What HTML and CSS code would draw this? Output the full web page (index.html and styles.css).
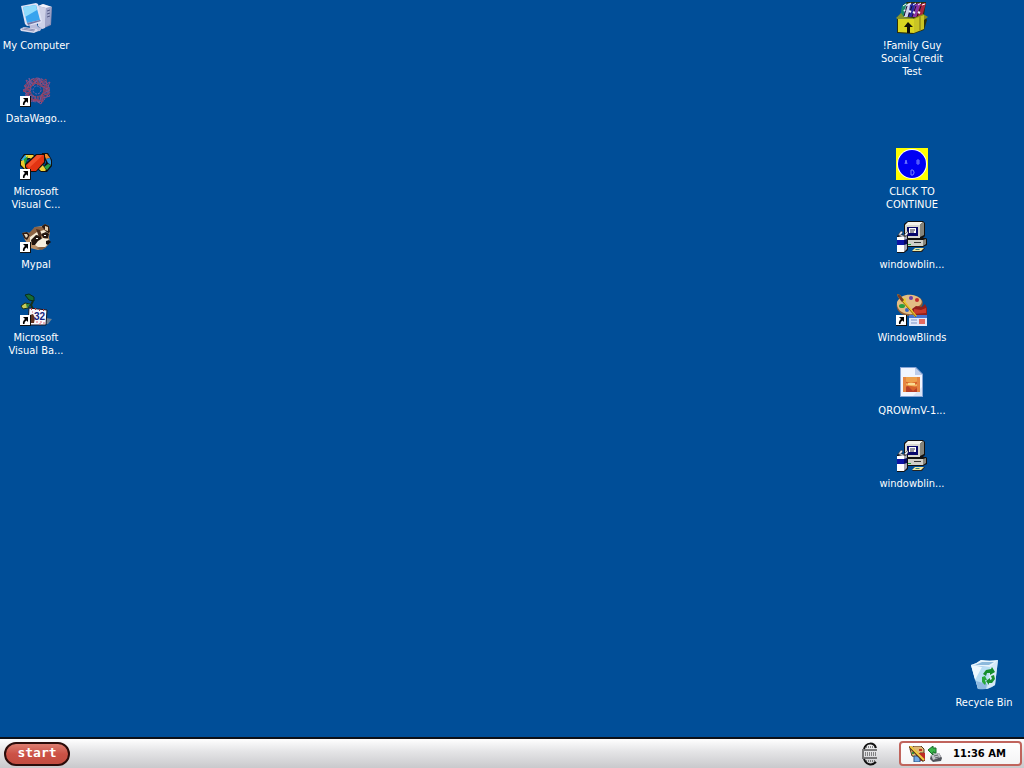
FILE: index.html
```html
<!DOCTYPE html>
<html lang="en">
<head>
    <meta charset="UTF-8">
    <meta name="viewport" content="width=device-width, initial-scale=1.0">
    <title>Desktop</title>
    <link rel="stylesheet" href="styles.css">
</head>
<body>
    <!-- Shared icon parts -->
    <svg class="sprites" aria-hidden="true">
        <symbol id="shortcut" viewBox="0 0 11 11">
            <rect width="11" height="11" fill="#111"/>
            <rect width="10" height="10" fill="#fff"/>
            <path d="M3 2h5v5L6.500 5.500C5 6.500 4.500 7.500 4.500 9H3C2.500 7 3.500 5 5 4z" fill="#000"/>
        </symbol>
        <symbol id="installer" viewBox="0 0 32 32">
            <path d="M8 3l4-3h15l2 2v13l-3 3H10l-2-2z" fill="#111"/>
            <path d="M9 4l3-3h15l-3 3z" fill="#f4f4ee"/>
            <path d="M24 4l3-3 1 1v12l-4 2z" fill="#85857c"/>
            <path d="M9 4h15v13H9z" fill="#d8d8d0"/>
            <path d="M11 6h11v9H11z" fill="#08086a"/>
            <path d="M13 7h7v5h-7z" fill="#fff"/>
            <path d="M14 9h5M14 11h4" stroke="#334" fill="none"/>
            <path d="M10 19l4-2h16l1 1v6l-4 2H10z" fill="#111"/>
            <path d="M11 19h16v6H11z" fill="#cfcfc8"/>
            <path d="M27 19l3-1v5l-3 2z" fill="#85857c"/>
            <path d="M18 21h7v1h-7z" fill="#333"/>
            <path d="M12 23h3v1h-3z" fill="#1a9a32"/>
            <path d="M1 15l3-2 4 1 4 1v14l-4 3H1z" fill="#111"/>
            <path d="M1 16h7v15H1z" fill="#fff"/>
            <path d="M8 16l3-1v13l-3 3z" fill="#a9aab8"/>
            <path d="M1 19h7v5H1z" fill="#0c14a4"/>
            <path d="M8 19l3-1v5l-3 1z" fill="#060a62"/>
            <path d="M2 15l3-1 4 1-2 1z" fill="#d9dbe8"/>
            <path d="M2 14l3-4 2 1-2 3zM8 14l4-4v3l-2 2z" fill="#e7e8f2" stroke="#222" stroke-width="0.500"/>
            <path d="M19 27h10l-3 4H16z" fill="#222"/>
            <path d="M19 27h9l-3 3h-9z" fill="#efe9a2"/>
            <path d="M20 28h4l-1 1h-4z" fill="#2b7f83"/>
        </symbol>
    </svg>

    <main class="desktop">
        <a href="#" class="icon left row-1">
            <svg viewBox="0 0 32 32" aria-hidden="true">
                <path d="M18 4l5-2 9 3-1 18-9 4-4-3z" fill="#8e92b8"/>
                <path d="M18 4l5-2 9 3-6 1z" fill="#f1f2fb"/>
                <path d="M18 4l8 2-1 20-3 1-4-3z" fill="#cfd2e8"/>
                <path d="M26 6l5-1-1 17-5 3z" fill="#a2a7cb"/>
                <path d="M27 9l3-1M27 12l3-1M27 15l3-1" stroke="#565c88"/>
                <path d="M9 21l7-1 2 5 4 1-2 3-9 1-4-2 3-2z" fill="#b9bddb"/>
                <path d="M1 4l15-3 2 1 4 17-1 2-14 3-2-2z" fill="#dfe3f5"/>
                <path d="M3 5l13-2 4 15-13 3z" fill="#38a4ee"/>
                <path d="M3 5l13-2 1 5-12 7z" fill="#8fdbfc"/>
                <path d="M7 21l13-3 1 1-13 4z" fill="#7277a6"/>
                <path d="M0 27l4-2 13 2 1 2-4 2L1 29z" fill="#d8daed"/>
                <path d="M2 27l12 2M4 26l11 2" stroke="#8d91b5"/>
            </svg>
            <span>My Computer</span>
        </a>
        <a href="#" class="icon left row-2">
            <svg viewBox="0 0 32 32" aria-hidden="true">
                <g fill="none" stroke-width="1">
                    <circle cx="17" cy="15" r="9" stroke="#604a80" stroke-width="6" stroke-dasharray="2 1"/>
                    <path d="M6 5l7 4 6-6 5 7 6-3-4 9 4 5-7 2-2 6-6-4-8 3 1-8-5-5 6-3z" stroke="#8f4a83"/>
                    <path d="M4 11l8-7 6 6 8-6 1 10 3 4-9 3-1 6-8-3-6-2 4-6z" stroke="#a0415c"/>
                    <path d="M9 3l2 12-6 5 9 1 5 7 3-9 8-4-9-4-2-8-6 8z" stroke="#6d5a9f"/>
                    <path d="M3 16l9-5 4-8 4 8 10 2-8 6 1 8-8-3-8 2 2-8z" stroke="#95405f"/>
                    <circle cx="17" cy="15" r="12" stroke="#7a5590" stroke-dasharray="3 2"/>
                    <circle cx="17" cy="15" r="7" stroke="#a04458" stroke-dasharray="2 1"/>
                    <circle cx="17" cy="15" r="4" stroke="#7560a8" stroke-dasharray="2 1"/>
                </g>
                <use href="#shortcut" x="0" y="21" width="11" height="11"/>
            </svg>
            <span>DataWago...</span>
        </a>
        <a href="#" class="icon left row-3">
            <svg viewBox="0 0 32 32" aria-hidden="true">
                <!-- left loop -->
                <path d="M0 12l4-6h9l5 4 3 4-5 3-7 7-3-1-6-5z" fill="#101010"/>
                <path d="M1 12l4-5h4L4 14z" fill="#35a9e0"/>
                <path d="M6 7h7l4 4-3 3-4-4H6z" fill="#f3d239"/>
                <path d="M4 11l4-3-1 4-1 3 4 3-2 3-4-3z" fill="#22a03a"/>
                <path d="M1 13l3-1 1 6 3 3-2 1-5-5z" fill="#f0c92c"/>
                <path d="M7 12l3-1 3 3-5 4-2-2z" fill="#004e98"/>
                <!-- right loop -->
                <path d="M22 5h6l4 7v6l-5 6h-6l-5-4 5-6z" fill="#101010"/>
                <path d="M24 6h3l3 4-4 1z" fill="#ee8a2a"/>
                <path d="M26 11l4-1 1 3v4l-3-2z" fill="#2c8fd8"/>
                <path d="M28 16l3 1-4 5-3-3z" fill="#2a9f48"/>
                <path d="M18 20l4-4 2 3 2 3-1 1h-4z" fill="#f3d239"/>
                <path d="M24 12l2 1v2l-2 3-2-2z" fill="#004e98"/>
                <path d="M16 6h9v9l-9 9H9l-4-4v-4z" fill="#101010"/>
                <path d="M17 7h7v7l-8 9h-6l-4-4v-2z" fill="#e23412"/>
                <path d="M17 7h6L9 20l-2-3z" fill="#f2522b"/>
                <use href="#shortcut" x="0" y="21" width="11" height="11"/>
            </svg>
            <span>Microsoft<br>Visual C...</span>
        </a>
        <a href="#" class="icon left row-4">
            <svg viewBox="0 0 32 32" aria-hidden="true">
                <path d="M2 12l4-1 4 1 5-6 7-1 3-2 4 2 1 6-1 5 1 6-5 5-7 2-8-2-5-8z" fill="#b98f68"/>
                <path d="M2 12l5-1 3 3-3 5-3-2z" fill="#2c1b13"/>
                <path d="M4 13l3 0 1 2-2 2z" fill="#e8d8be"/>
                <path d="M22 5l3-2 4 2 1 6-3 2-5-4z" fill="#2c1b13"/>
                <path d="M25 5l3 1v4l-3-1z" fill="#e6cfae"/>
                <path d="M9 12l6-6 7 0 4 4-8 2-7 6z" fill="#8c6243"/>
                <path d="M10 16l7-5 7-2 4 3-2 2-8 1-5 7-3-1z" fill="#f5e9d5"/>
                <path d="M11 19l5-5 5 1 1 4-5 5-5 0z" fill="#21140f"/>
                <path d="M21 13l5-2 3 2-1 4-4 1z" fill="#21140f"/>
                <path d="M18 20l5-3 5 1 2 3-5 5-7 0-3-2z" fill="#f7efdf"/>
                <path d="M26 20l3-1 2 2-3 3-2-1z" fill="#15100f"/>
                <path d="M16 8l4 1 2 6-3 1z" fill="#4c2f20"/>
                <path d="M16 17h2v1h-2zM24 14h2v1h-2z" fill="#fff"/>
                <path d="M16 27l5-1 5 0-4 3z" fill="#856042"/>
                <use href="#shortcut" x="0" y="21" width="11" height="11"/>
            </svg>
            <span>Mypal</span>
        </a>
        <a href="#" class="icon left row-5">
            <svg viewBox="0 0 32 32" aria-hidden="true">
                <path d="M26 24l6 1-4 5h-3z" fill="#6d8295"/>
                <path d="M5 1l4-1 5 3v4l-5-1z" fill="#176c36" stroke="#0c2c18"/>
                <path d="M1 12l4-3 5 1-2 4-5 1z" fill="#c9cb5a" stroke="#1c3014"/>
                <path d="M6 10l4 0-3 4z" fill="#2d8440"/>
                <path d="M13 7l-2 4 2 4" stroke="#182f18" fill="none" stroke-width="2"/>
                <path d="M9 14l18 2-1 15-18 0z" fill="#f8f8fd" stroke="#151520"/>
                <path d="M11 15h1M15 15h1M19 16h1M23 16h1" stroke="#b33540" stroke-width="2"/>
                <path d="M10 21l3-1 2 4-1 5h-4z" fill="#60321f"/>
                <path d="M16 28h2M20 28h2M23 29h2M19 30h2M12 18h1" stroke="#dd6673"/>
                <text x="14" y="26" class="calendar-day">32</text>
                <use href="#shortcut" x="0" y="21" width="11" height="11"/>
            </svg>
            <span>Microsoft<br>Visual Ba...</span>
        </a>

        <a href="#" class="icon right row-1">
            <svg viewBox="0 0 32 32" aria-hidden="true">
                <path d="M1 15l4-3 2-9 4-3h19l-2 13 3 5-3 10-11 4-16-1z" fill="#2d3008"/>
                <path d="M6 4l4-3 2 1-3 13H4z" fill="#188a6c"/>
                <path d="M10 3l3-2 3 1-3 13H8z" fill="#cfd0ea"/>
                <path d="M14 3l3-2 3 1-3 13h-5z" fill="#272b9e"/>
                <path d="M19 3l3-2 3 1-4 13h-5z" fill="#8a35a8"/>
                <path d="M24 3l3-2 3 0-4 14h-6z" fill="#a82441"/>
                <path d="M7 4l3-2M12 3l3-2M17 3l3-2M22 3l3-2M26 3l3-1" stroke="#fff"/>
                <path d="M11 4l-3 10M16 4l-4 11M20 4l-4 11M25 4l-4 11" stroke="#1c1030"/>
                <path d="M8 8l1 1M13 9l2 1M17 10l2 1M22 10l2 1" stroke="#f0f2fb" stroke-width="2"/>
                <path d="M0 16l5-5 3 4 10 1-2 3-13-1z" fill="#87952d"/>
                <path d="M18 16l9-4 5 3-4 3-9 2z" fill="#8c8f1c"/>
                <path d="M2 17l16 0v14l-16-1z" fill="#d9d522"/>
                <path d="M18 17l10-4v14l-10 4z" fill="#c9c425"/>
                <path d="M23 15l2-1v14l-2 1z" fill="#a29b1b"/>
                <path d="M12 20l5 5h-3v6h-3v-6H8z" fill="#100f08"/>
            </svg>
            <span>!Family Guy<br>Social Credit<br>Test</span>
        </a>
        <a href="#" class="icon right row-3">
            <svg viewBox="0 0 32 32" aria-hidden="true">
                <rect width="32" height="32" fill="#ffff00"/>
                <circle cx="16" cy="16" r="15" fill="#fff"/>
                <circle cx="16" cy="16" r="14" fill="#0000f4"/>
                <path d="M9 16l1-4 1 4M9 15h2M21 12v4h2v-4zM21 14h2" fill="none" stroke="#6e79ff"/>
                <path d="M15 22h2l1 2v1l-1 2h-2z" fill="none" stroke="#7885ff"/>
            </svg>
            <span>CLICK TO<br>CONTINUE</span>
        </a>
        <a href="#" class="icon right row-4">
            <svg viewBox="0 0 32 32" aria-hidden="true"><use href="#installer"/></svg>
            <span>windowblin...</span>
        </a>
        <a href="#" class="icon right row-5">
            <svg viewBox="0 0 32 32" aria-hidden="true">
                <path d="M1 9C4 2 13-1 20 2c6 2 8 6 6 10-2 3-5 1-6 4 0 4-1 7-6 6C6 22-1 17 1 9z" fill="#8e5c35"/>
                <path d="M1 8C4 1 13-1 20 2c5 2 7 5 5 8-2 3-5 2-6 5-1 4-2 6-6 5C6 20 0 15 1 8z" fill="#e2bd85"/>
                <ellipse cx="6" cy="12" rx="3" ry="2" fill="#2c9d3d"/>
                <ellipse cx="8" cy="6" rx="2" ry="2" fill="#e7d22d"/>
                <ellipse cx="15" cy="4" rx="2" ry="2" fill="#6c3fa5"/>
                <ellipse cx="21" cy="6" rx="2" ry="2" fill="#c52c2c"/>
                <ellipse cx="11" cy="16" rx="2" ry="2" fill="#3265c9"/>
                <path d="M16 15l4-3 6 1 3-3 2 4v8H18z" fill="#911f1c"/>
                <path d="M18 15l7 1 5-2v5l-12 1z" fill="#c93a2c"/>
                <path d="M13 21h18v11H13z" fill="#dfe8fa"/>
                <path d="M13 21h18v3H13z" fill="#4874d1"/>
                <path d="M15 26h6M15 29h6" stroke="#7b93c9"/>
                <path d="M23 25h6v5h-6z" fill="#e36b61"/>
                <path d="M1 0l3 1 17 21-2 1L2 3z" fill="#eac32e"/>
                <path d="M1 0l3 1 4 5-2 2-4-5z" fill="#793b27"/>
                <path d="M6 7l14 16" stroke="#8e651b"/>
                <use href="#shortcut" x="0" y="21" width="11" height="11"/>
            </svg>
            <span>WindowBlinds</span>
        </a>
        <a href="#" class="icon right row-6">
            <svg viewBox="0 0 32 32" aria-hidden="true">
                <path d="M4 0h16l7 7v23H4z" fill="#86a4d6"/>
                <path d="M5 1h14l7 7v21H5z" fill="#f1f5ff"/>
                <path d="M19 1l7 7h-7z" fill="#bdcdec"/>
                <path d="M17 29l9-9v9z" fill="#dbe4f5"/>
                <path d="M7 10h17v15H7z" fill="#d8632a"/>
                <path d="M7 10h17v4l-9 2-8-2z" fill="#eea04b"/>
                <path d="M7 17c5-3 11 4 17-2v3c-6 4-12-2-17 2z" fill="#f3b45e"/>
                <path d="M7 22l5-3 5 5 4-3 3 2v2H7z" fill="#b8402a"/>
                <path d="M7 10h3v15H7zM21 10h3v15h-3z" fill="#e58542"/>
                <path d="M12 16h7v2h-7z" fill="#fbdc94"/>
            </svg>
            <span>QROWmV-1...</span>
        </a>
        <a href="#" class="icon right row-7">
            <svg viewBox="0 0 32 32" aria-hidden="true"><use href="#installer"/></svg>
            <span>windowblin...</span>
        </a>

        <a href="#" class="icon corner row-10">
            <svg viewBox="0 0 32 32" aria-hidden="true">
                <path d="M3 6c4-1 7-3 10-5 6 1 11 1 17 0l-3 25c-5 4-10 5-17 4z" fill="#a7cbea"/>
                <path d="M3 6c4-1 7-3 10-5 6 1 11 1 17 0-3 4-6 6-8 7z" fill="#e9f5fd"/>
                <path d="M7 6l7-3 12 0-5 3z" fill="#8db9dc"/>
                <path d="M3 6c6 2 12 2 19 2l-3 22-9 0z" fill="#b9def4"/>
                <path d="M3 6l11 2-7 13z" fill="#edf9ff"/>
                <path d="M22 8l8-7-3 25-8 4z" fill="#d6e9f8"/>
                <path d="M8 22l11 3-1 5h-8z" fill="#8fb9e0"/>
                <path d="M15 15l3-4 5-1 1-2 3 5-5 3v-2l-3 0-1 3z" fill="#148c2b"/>
                <path d="M23 17l3-1 1 4-3 4h-3v2l-3-4 4-3v2l2-1z" fill="#198f2d"/>
                <path d="M14 18l3-1 2 4-2 0 1 3-1 2-3-3z" fill="#27a83b"/>
            </svg>
            <span>Recycle Bin</span>
        </a>
    </main>

    <footer class="taskbar">
        <button type="button" class="start">start</button>
        <button type="button" class="tray-handle" aria-label="Tray menu">
            <svg viewBox="0 0 16 24" aria-hidden="true">
                <path d="M2 7C4 0 12 0 14 6M2 17c2 6 8 7 12 3" fill="none" stroke="#111" stroke-width="2"/>
                <path d="M1 7v10" stroke="#111"/>
                <path d="M2 8h13M2 16h13" stroke="#111"/>
                <path d="M4 5h9M3 11h12M3 13h12M4 19h9" stroke="#222" stroke-dasharray="1 1"/>
            </svg>
        </button>
        <div class="tray">
            <svg viewBox="0 0 16 16" aria-hidden="true">
                <path d="M1 3l4-3h7l3 3v4h-4l-2 4-6-1z" fill="#e0b874" stroke="#593b20"/>
                <path d="M7 7h9v8H7z" fill="#bf2a25"/>
                <path d="M5 10h6v6H5z" fill="#73a9e6" stroke="#2b5385"/>
                <path d="M10 3h3v2h-3z" fill="#bf3422"/>
                <path d="M3 6h2v2H3z" fill="#329540"/>
                <path d="M0 0l15 15" stroke="#58381c" stroke-width="3"/>
                <path d="M1 0l14 14" stroke="#f2cd42" stroke-width="2"/>
            </svg>
            <svg viewBox="0 0 16 16" aria-hidden="true">
                <path d="M4 9l8-2 3 5-1 3-8 1-3-3z" fill="#50535a"/>
                <path d="M4 9l8-2 2 4-8 3z" fill="#c2c4c8"/>
                <path d="M7 10l4-1M8 12l4-1" stroke="#61646a"/>
                <path d="M1 4l5-4v2h3v5H7V6H6v3z" fill="#38b549" stroke="#1a6d2a"/>
            </svg>
            <time datetime="11:36">11:36 AM</time>
        </div>
    </footer>
</body>
</html>
```
FILE: styles.css
```css
* {
    box-sizing: border-box;
}

body {
    margin: 0;
    min-height: 100vh;
    display: flex;
    flex-direction: column;
    background-color: #004e98;
    font-family: "DejaVu Sans Condensed", "DejaVu Sans", Tahoma, sans-serif;
    font-size: 11px;
    line-height: 13px;
    color: #fff;
}

.sprites {
    display: none;
}

.desktop {
    flex: 1;
    display: grid;
    grid-template-columns: 72px 1fr 72px 72px;
    grid-auto-rows: 73px;
    padding: 2px 4px 0 0;
}

.icon {
    display: flex;
    flex-direction: column;
    align-items: center;
    gap: 5px;
    color: #fff;
    text-align: center;
    text-decoration: none;
    white-space: nowrap;
}

.icon svg {
    width: 32px;
    height: 32px;
    flex: none;
    overflow: visible;
}

/* Grid columns */
.left { grid-column: 1; }
.right { grid-column: 3; }
.corner { grid-column: 4; }

/* Grid rows */
.row-1 { grid-row: 1; }
.row-2 { grid-row: 2; }
.row-3 { grid-row: 3; }
.row-4 { grid-row: 4; }
.row-5 { grid-row: 5; }
.row-6 { grid-row: 6; }
.row-7 { grid-row: 7; }
.row-10 { grid-row: 10; }

.calendar-day {
    font-family: "Liberation Sans", sans-serif;
    font-size: 10px;
    font-weight: bold;
    fill: #14237e;
}

.taskbar {
    display: flex;
    align-items: center;
    height: 31px;
    padding: 0 2px 0 4px;
    border-top: 2px solid #0c1018;
    background: linear-gradient(#fff, #e6e6e8 40%, #c9c9cc);
}

.start {
    width: 66px;
    height: 24px;
    padding: 0 0 2px;
    border: 2px solid #2a0c0a;
    border-radius: 12px;
    background: linear-gradient(#dc7d70, #cc5246 50%, #c24c40);
    color: #fff;
    font-family: "DejaVu Sans Mono", monospace;
    font-size: 13px;
    font-weight: bold;
    line-height: 16px;
}

.tray-handle {
    width: 16px;
    height: 24px;
    margin: 0 21px 0 auto;
    padding: 0;
    border: 0;
    background: none;
}

.tray-handle svg {
    display: block;
    width: 16px;
    height: 24px;
}

.tray {
    display: flex;
    align-items: center;
    gap: 2px;
    height: 25px;
    padding: 0 14px 0 8px;
    border: 2px solid #c0645c;
    border-radius: 4px;
    background: linear-gradient(#fff, #f4f4f5);
    color: #000;
    font-family: "DejaVu Sans", Verdana, sans-serif;
    font-size: 10px;
    font-weight: bold;
}

.tray svg {
    width: 16px;
    height: 16px;
}

.tray time {
    margin-left: 8px;
}
```
